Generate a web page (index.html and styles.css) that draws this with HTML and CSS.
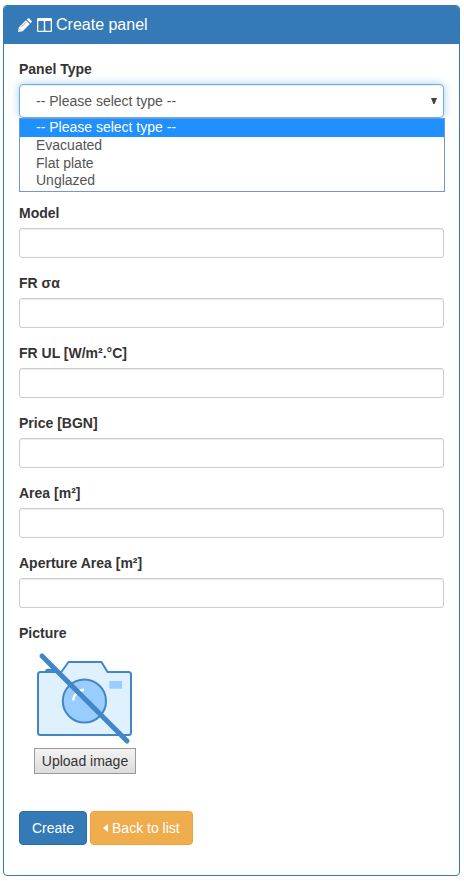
FILE: index.html
```html
<!DOCTYPE html>
<html lang="en">
<head>
    <meta charset="UTF-8">
    <meta name="viewport" content="width=device-width, initial-scale=1.0">
    <title>Create panel</title>
    <link rel="stylesheet" href="styles.css">
</head>
<body>
    <div class="panel">
        <div class="panel-heading">
            <svg class="icon-pencil" viewBox="0 0 14 14">
                <path fill="#fff" d="M0 14 L0.8 9.3 L7.9 2.2 L11.8 6.1 L4.7 13.2 Z M8.7 1.4 L9.7 0.5 Q10.5 -0.1 11.2 0.5 L13.5 2.8 Q14.1 3.5 13.5 4.3 L12.6 5.3 Z" />
                <path stroke="#337ab7" stroke-width="0.6" fill="none" d="M3.2 9.2 L8.2 4.2 M1.4 10.9 L3.1 12.6" />
            </svg>
            <svg class="icon-columns" viewBox="0 0 15 14">
                <path fill="#fff" fill-rule="evenodd" d="M1.2 0 H13.8 Q15 0 15 1.2 V12.8 Q15 14 13.8 14 H1.2 Q0 14 0 12.8 V1.2 Q0 0 1.2 0 Z M1.3 3 V12.7 H6.8 V3 Z M8.2 3 V12.7 H13.7 V3 Z" />
            </svg>
            <h3 class="panel-title">Create panel</h3>
        </div>
        <form class="panel-body">
            <div class="form-group type-group">
                <label>Panel Type</label>
                <div class="select">
                    <span>-- Please select type --</span>
                    <svg class="select-arrow" viewBox="0 0 6 6"><path fill="#444" d="M0 0 H6 L3.6 6 H2.4 Z" /></svg>
                    <ul class="select-menu">
                        <li class="selected">-- Please select type --</li>
                        <li>Evacuated</li>
                        <li>Flat plate</li>
                        <li>Unglazed</li>
                    </ul>
                </div>
            </div>
            <div class="form-group">
                <label for="model">Model</label>
                <input type="text" class="form-control" id="model">
            </div>
            <div class="form-group">
                <label for="fr-sa">FR σα</label>
                <input type="text" class="form-control" id="fr-sa">
            </div>
            <div class="form-group">
                <label for="fr-ul">FR UL [W/m².°C]</label>
                <input type="text" class="form-control" id="fr-ul">
            </div>
            <div class="form-group">
                <label for="price">Price [BGN]</label>
                <input type="text" class="form-control" id="price">
            </div>
            <div class="form-group">
                <label for="area">Area [m²]</label>
                <input type="text" class="form-control" id="area">
            </div>
            <div class="form-group">
                <label for="aperture">Aperture Area [m²]</label>
                <input type="text" class="form-control" id="aperture">
            </div>
            <div class="form-group">
                <label>Picture</label>
                <div class="picture">
                    <svg class="no-image" viewBox="0 0 100 100">
                        <g stroke="#4187c7" stroke-width="2" stroke-linejoin="round">
                            <path fill="#4187c7" d="M12 23 L13 21.8 H19 L20 23 Z" />
                            <path fill="#dff0ff" d="M6.3 24 H27.3 L34.5 14 H67.5 L73.5 24 H94.5 Q97 24 97 26.5 V84.5 Q97 87 94.5 87 H6.3 Q4 87 4 84.5 V26.5 Q4 24 6.3 24 Z" />
                            <circle cx="50.4" cy="53" r="21.6" fill="#99ccff" />
                        </g>
                        <rect x="75.3" y="33" width="12.7" height="7.7" fill="#99ccff" />
                        <path fill="none" stroke="#fff" stroke-width="2.4" d="M39 52.5 Q39.6 48 42.2 45.6 M45 43.2 Q47 42 50 41.8" />
                        <path stroke="#4187c7" stroke-width="5" stroke-linecap="round" d="M8 8 L93 93" />
                    </svg>
                    <button type="button" class="upload">Upload image</button>
                </div>
            </div>
            <div class="actions">
                <button type="button" class="btn btn-primary">Create</button>
                <a href="#" class="btn btn-warning"><svg class="icon-caret" viewBox="0 0 5 8"><path fill="#fff" d="M5 0 V8 L0 4 Z" /></svg>Back to list</a>
            </div>
        </form>
    </div>
</body>
</html>
```
FILE: styles.css
```css
* {
    box-sizing: border-box;
}

body {
    margin: 0;
    padding: 5px 4px 5px 3px;
    font-family: "Liberation Sans", Arial, sans-serif;
    font-size: 14px;
    line-height: 20px;
    color: #333;
    background-color: #fff;
}

.panel {
    height: 871px;
    border: 1px solid #337ab7;
    border-radius: 4px;
}

.panel-heading {
    display: flex;
    align-items: center;
    height: 38px;
    padding: 0 14px;
    color: #fff;
    background-color: #337ab7;
    border-radius: 3px 3px 0 0;
}

.icon-pencil {
    width: 14px;
    height: 14px;
    margin-right: 5px;
}

.icon-columns {
    width: 15px;
    height: 14px;
    margin-right: 4px;
}

.panel-title {
    margin: 0;
    font-size: 16px;
    font-weight: normal;
}

.panel-body {
    padding: 15px;
}

.form-group {
    margin-bottom: 15px;
}

.type-group {
    margin-bottom: 85px;
}

label {
    display: block;
    margin-bottom: 5px;
    font-weight: bold;
}

.form-control {
    display: block;
    width: 100%;
    height: 30px;
    border: 1px solid #ccc;
    border-radius: 3px;
    box-shadow: inset 0 1px 1px rgba(0, 0, 0, 0.075);
}

.select {
    position: relative;
    display: flex;
    align-items: center;
    justify-content: space-between;
    height: 34px;
    padding: 0 6px 0 16px;
    color: #555;
    border: 1px solid #66afe9;
    border-radius: 4px;
    box-shadow: inset 0 1px 1px rgba(0, 0, 0, 0.075), 0 0 8px rgba(102, 175, 233, 0.6);
}

.select-arrow {
    width: 6px;
    height: 6px;
}

.select-menu {
    position: absolute;
    top: 33px;
    left: -1px;
    width: 426px;
    height: 74px;
    margin: 0;
    padding: 0;
    list-style: none;
    background-color: #fff;
    border: 1px solid #7496d2;
}

.select-menu li {
    height: 17.7px;
    padding-left: 16px;
    line-height: 17.7px;
}

.select-menu .selected {
    height: 18px;
    color: #fff;
    background-color: #1e90ff;
}

.picture {
    display: flex;
    flex-direction: column;
    align-items: flex-start;
    padding: 0 15px;
}

.no-image {
    width: 100px;
    height: 100px;
}

.upload {
    width: 102px;
    height: 26px;
    padding: 0;
    font: inherit;
    color: #333;
    background: linear-gradient(#f3f3f3, #dcdcdc);
    border: 1px solid #999;
}

.actions {
    display: flex;
    gap: 3px;
    padding-top: 22px;
}

.btn {
    display: flex;
    align-items: center;
    height: 34px;
    padding: 0 12px;
    font: inherit;
    color: #fff;
    text-decoration: none;
    border: 1px solid;
    border-radius: 4px;
}

.btn-primary {
    background-color: #337ab7;
    border-color: #2e6da4;
}

.btn-warning {
    background-color: #f0ad4e;
    border-color: #eea236;
}

.icon-caret {
    width: 5px;
    height: 8px;
    margin-right: 4px;
}
```
